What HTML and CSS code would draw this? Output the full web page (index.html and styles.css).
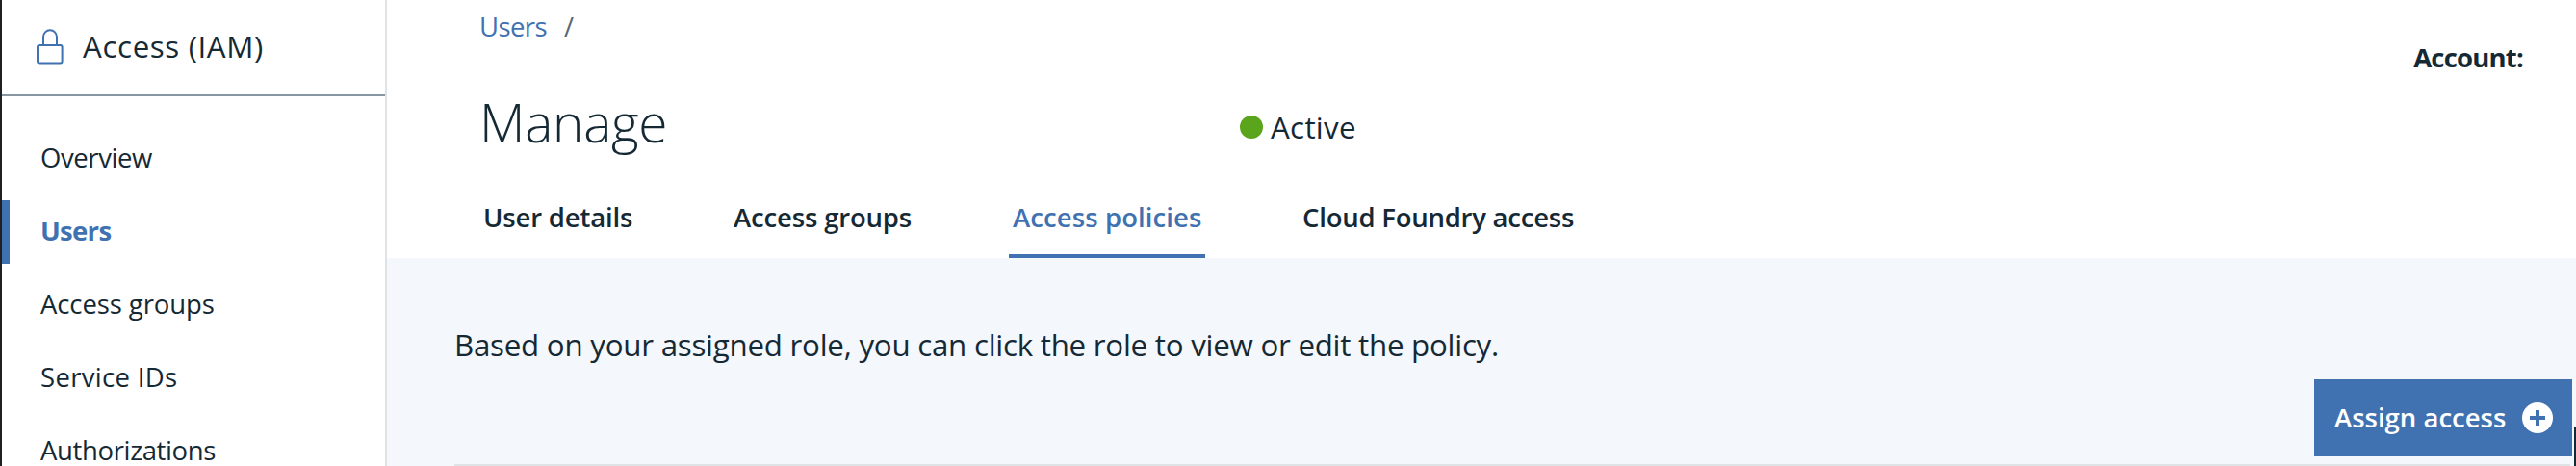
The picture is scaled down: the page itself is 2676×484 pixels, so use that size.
FILE: index.html
```
<!DOCTYPE html>
<html lang="en">
<head>
<meta charset="utf-8">
<title>Access (IAM)</title>
<link rel="stylesheet" href="styles.css">
</head>
<body>
<div class="app">
  <aside class="sidebar">
    <header class="sidebar-header">
      <svg class="lock" width="28" height="37" viewBox="0 0 28 37" fill="none" stroke="#4071b1" stroke-width="2">
        <rect x="1" y="17" width="25.6" height="18.6" rx="2"/>
        <path d="M7 17V8.3a7 7 0 0 1 14 0V17"/>
      </svg>
      <span class="sidebar-title">Access (IAM)</span>
    </header>
    <nav class="nav">
      <a class="nav-item nav-overview">Overview</a>
      <a class="nav-item nav-active">Users</a>
      <a class="nav-item">Access groups</a>
      <a class="nav-item nav-service">Service IDs</a>
      <a class="nav-item nav-auth">Authorizations</a>
    </nav>
  </aside>
  <main class="main">
    <section class="page-header">
      <div class="heading">
        <div class="breadcrumb"><a class="crumb">Users</a><span class="slash">/</span></div>
        <div class="title-row">
          <h1 class="title">Manage</h1>
          <span class="status"><i class="status-dot"></i>Active</span>
        </div>
        <div class="tabs">
          <a class="tab tab-details">User details</a>
          <a class="tab tab-groups">Access groups</a>
          <a class="tab tab-policies">Access policies</a>
          <a class="tab tab-foundry">Cloud Foundry access</a>
        </div>
      </div>
      <div class="account">Account:</div>
    </section>
    <section class="panel">
      <p class="intro">Based on your assigned role, you can click the role to view or edit the policy.</p>
      <button class="assign"><span class="assign-label">Assign access</span>
        <svg class="plus" width="32" height="32" viewBox="0 0 32 32"><circle cx="16" cy="16" r="16" fill="#fff"/><path d="M14 8h4v6h6v4h-6v6h-4v-6H8v-4h6z" fill="#4071b1"/></svg>
      </button>
      <div class="rule"></div>
    </section>
  </main>
  <div class="edge"></div>
</div>
</body>
</html>
```

FILE: styles.css
```
* { box-sizing: border-box; }
body { margin: 0; background: #fff; color: #152935; font-family: "Open Sans", "Noto Sans", sans-serif; font-size: 27.5px; }
.app { display: flex; height: 484px; overflow: hidden; border-left: 2px solid #1f2022; position: relative; }

.sidebar { width: 398px; flex: none; }
.sidebar-header { display: flex; height: 100px; border-bottom: 2px solid #8897a2; padding-left: 36px; }
.lock { margin-top: 30px; flex: none; }
.sidebar-title { margin-left: 20px; line-height: 96px; font-size: 31.3px; letter-spacing: 0.62px; }
.nav { display: flex; flex-direction: column; gap: 10px; padding-top: 32px; }
.nav-item { height: 66px; line-height: 64px; padding-left: 40px; letter-spacing: -0.1px; flex: none; }
.nav-overview { letter-spacing: -0.42px; }
.nav-service { letter-spacing: 0.32px; }
.nav-auth { letter-spacing: -0.36px; }
.nav-active { border-left: 8px solid #4071b1; padding-left: 32px; color: #4071b1; font-weight: 700; letter-spacing: -0.7px; }

.main { flex: 1; border-left: 2px solid #dfe3e6; display: flex; flex-direction: column; }
.page-header { display: flex; justify-content: space-between; height: 268px; padding-left: 96px; flex: none; }
.heading { display: flex; flex-direction: column; }
.breadcrumb { display: flex; gap: 18px; line-height: 55px; height: 54px; letter-spacing: -0.6px; }
.crumb { color: #4071b1; }
.slash { color: #5a6872; }
.title-row { display: flex; height: 81px; margin-top: 32px; }
.title { width: 784px; margin: 0; font-size: 55px; line-height: 82px; font-weight: 300; letter-spacing: -0.3px; }
.status { display: flex; align-items: flex-start; margin-left: 6px; font-size: 31.3px; line-height: 92px; letter-spacing: 0.31px; }
.status-dot { width: 24px; height: 24px; margin: 34px 8px 0 0; border-radius: 50%; background: #5aa51c; }
.tabs { display: flex; gap: 100px; margin-top: 37px; height: 64px; font-weight: 600; white-space: nowrap; }
.tab { line-height: 43px; letter-spacing: -0.16px; height: 64px; }
.tab-details { width: 160px; padding-left: 4px; }
.tab-groups { width: 190px; padding-left: 4px; }
.tab-policies { width: 204px; padding-left: 4px; color: #4071b1; border-bottom: 4px solid #4071b1; letter-spacing: 0.1px; }
.tab-foundry { padding-left: 1px; letter-spacing: -0.23px; }
.account { margin-right: 55px; line-height: 119px; font-weight: 700; letter-spacing: -0.8px; }

.panel { flex: 1; display: flex; flex-direction: column; background: #f4f7fb; padding: 60px 4px 0 70px; }
.intro { margin: 0; height: 66px; line-height: 60px; font-size: 31.3px; letter-spacing: -0.25px; }
.assign { display: flex; align-items: center; justify-content: space-between; align-self: flex-end; width: 268px; height: 80px; padding: 0 20px 0 21px; border: 0; background: #4071b1; color: #fff; font: 600 27.5px/73px "Open Sans", "Noto Sans", sans-serif; flex: none; }
.assign-label { height: 80px; line-height: 79px; }
.rule { height: 2px; margin: 8px 2px 0 0; background: #dfe3e6; flex: none; }

/* window edge at the lower right */
.edge { position: absolute; right: 0; bottom: 0; width: 2px; height: 40px; background: #152935; }
```
